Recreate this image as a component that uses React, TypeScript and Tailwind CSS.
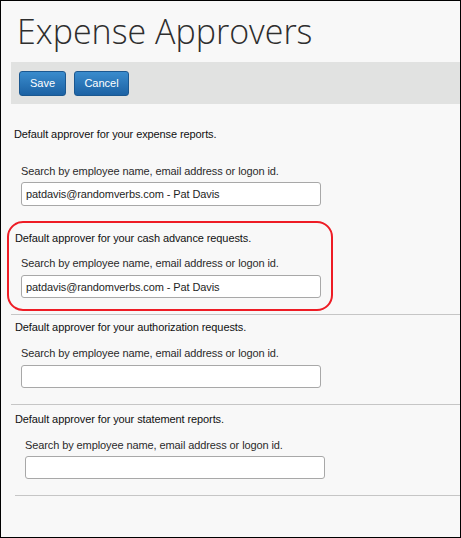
const LABEL = 'Search by employee name, email address or logon id.';
const PAT = 'patdavis@randomverbs.com - Pat Davis';

function Field({ value, tall }: { value?: string; tall?: boolean }) {
  return (
    <input
      readOnly
      value={value ?? ''}
      className={`${tall ? 'h-[24px]' : 'h-[23px]'} block w-[300px] rounded-[3px] border border-[#a8a8a8] bg-white pl-[4px] text-[11px] tracking-[-0.1px] text-[#1e1e1e] outline-none`}
    />
  );
}

function Heading({ children, className = '' }: { children: string; className?: string }) {
  return <div className={`text-[11px] leading-[16px] tracking-[-0.1px] text-[#111] ${className}`}>{children}</div>;
}

function Label({ className = '' }: { className?: string }) {
  return <div className={`text-[11px] leading-[16px] tracking-[-0.1px] text-[#2b2b2b] ${className}`}>{LABEL}</div>;
}

export default function App() {
  return (
    <div className="h-[538px] w-[461px] overflow-hidden border border-black bg-[#f8f8f8] font-['Liberation_Sans',Arial,sans-serif]">
      {/* Title */}
      <h1 className="pl-[16px] pt-[10px] font-['Open_Sans',sans-serif] text-[34px] font-light leading-[40px] text-[#2e2e2e]">
        Expense Approvers
      </h1>

      {/* Toolbar */}
      <div className="ml-[10px] mt-[11px] flex h-[42px] gap-[8px] bg-[#e1e2e1] pl-[8px] pt-[9px]">
        <button className="h-[25px] w-[47px] rounded-[3px] border border-[#1b5890] bg-gradient-to-b from-[#3a8ccd] to-[#1c62a4] text-[11px] text-white">
          Save
        </button>
        <button className="h-[25px] w-[55px] rounded-[3px] border border-[#1b5890] bg-gradient-to-b from-[#3a8ccd] to-[#1c62a4] text-[11px] text-white">
          Cancel
        </button>
      </div>

      {/* Expense reports */}
      <Heading className="mt-[22px] pl-[13px]">Default approver for your expense reports.</Heading>
      <Label className="mt-[21px] pl-[20px]" />
      <div className="ml-[20px] mt-[3px]">
        <Field value={PAT} tall />
      </div>

      {/* Cash advance (highlighted) */}
      <div className="ml-[6px] mt-[15px] h-[90px] w-[326px] rounded-[16px] border-2 border-[#ee1c25] pt-[7px]">
        <Heading className="pl-[6px]">Default approver for your cash advance requests.</Heading>
        <Label className="mt-[9px] pl-[12px]" />
        <div className="ml-[12px] mt-[4px]">
          <Field value={PAT} />
        </div>
      </div>
      <div className="ml-[10px] mt-[3px] h-px bg-[#c6c6c6]" />

      {/* Authorization */}
      <Heading className="mt-[4px] pl-[14px]">Default approver for your authorization requests.</Heading>
      <Label className="mt-[10px] pl-[20px]" />
      <div className="ml-[20px] mt-[4px]">
        <Field />
      </div>
      <div className="ml-[10px] mt-[16px] h-px bg-[#c6c6c6]" />

      {/* Statement reports */}
      <Heading className="mt-[6px] pl-[14px]">Default approver for your statement reports.</Heading>
      <Label className="mt-[10px] pl-[24px]" />
      <div className="ml-[24px] mt-[3px]">
        <Field />
      </div>
      <div className="ml-[14px] mt-[16px] h-px bg-[#c6c6c6]" />
    </div>
  );
}
